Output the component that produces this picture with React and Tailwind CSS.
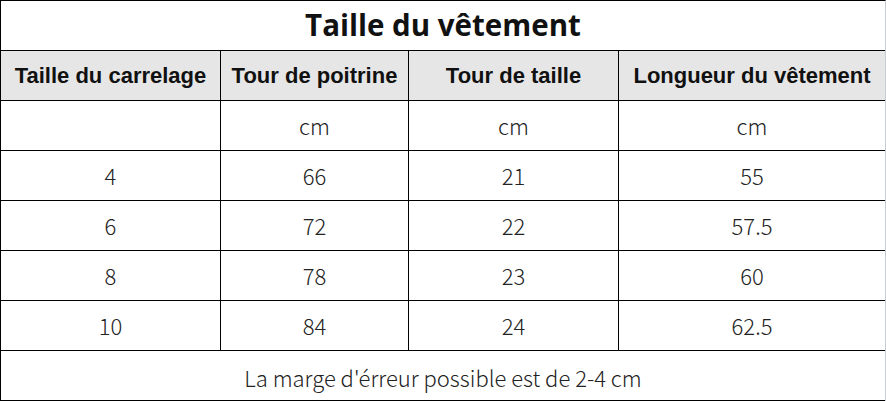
import React from 'react';

const cols = ['Taille du carrelage', 'Tour de poitrine', 'Tour de taille', 'Longueur du vêtement'];

const rows = [
  ['', 'cm', 'cm', 'cm'],
  ['4', '66', '21', '55'],
  ['6', '72', '22', '57.5'],
  ['8', '78', '23', '60'],
  ['10', '84', '24', '62.5'],
];

const cjk = { fontFamily: '"Noto Sans CJK SC", "Noto Sans", sans-serif' };

export default function App() {
  return (
    <div className="w-[886px] h-[401px] bg-white overflow-hidden">
      <div className="w-[886px] border-t border-l border-black border-r border-r-[#c8ccd4] text-black">
        {/* Title */}
        <div
          className="h-[50px] flex items-center justify-center border-b border-black text-[29.5px] font-bold text-[#111]"
          style={{ fontFamily: '"Open Sans", "Noto Sans", sans-serif' }}
        >
          Taille du vêtement
        </div>

        {/* Header */}
        <div className="grid grid-cols-[220px_188px_210px_1fr] h-[50px] bg-[#e6e6e6] border-b border-black">
          {cols.map((c, i) => (
            <div
              key={c}
              className={`flex items-center justify-center text-[22px] font-bold text-[#111] ${i < 3 ? 'border-r border-black' : ''}`}
              style={{ fontFamily: '"Liberation Sans", Arial, sans-serif' }}
            >
              {c}
            </div>
          ))}
        </div>

        {/* Body rows */}
        {rows.map((r, ri) => (
          <div key={ri} className="grid grid-cols-[220px_188px_210px_1fr] h-[50px] border-b border-black">
            {r.map((v, i) => (
              <div
                key={i}
                className={`flex items-center justify-center text-[22px] font-light text-[#222] ${i < 3 ? 'border-r border-black' : ''}`}
                style={cjk}
              >
                {v}
              </div>
            ))}
          </div>
        ))}

        {/* Footer */}
        <div
          className="h-[50px] flex items-center justify-center border-b border-black text-[22px] font-light text-[#222] pt-[3px]"
          style={cjk}
        >
          La marge d'érreur possible est de 2-4 cm
        </div>
      </div>
    </div>
  );
}
